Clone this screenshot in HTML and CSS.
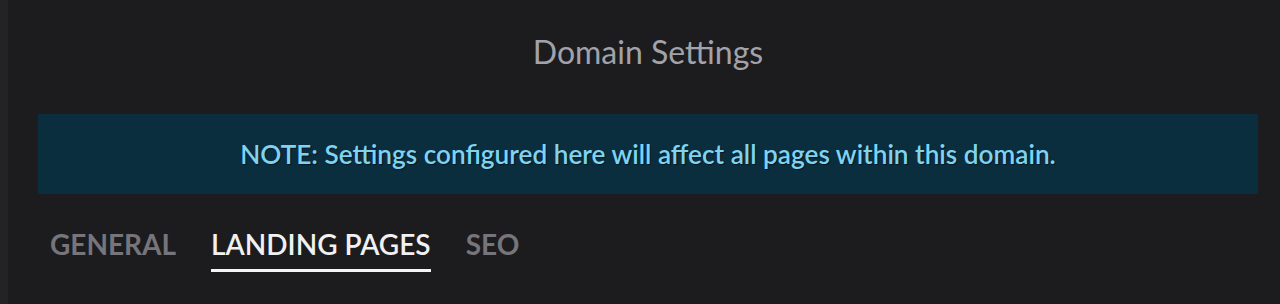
FILE: index.html
```html
<!DOCTYPE html>
<html lang="en">
<head>
<meta charset="utf-8">
<title>Domain Settings</title>
<link rel="stylesheet" href="styles.css">
</head>
<body>
<div class="page">
  <aside class="rail"></aside>
  <main class="panel">
    <h1 class="title">Domain Settings</h1>
    <div class="note">NOTE: Settings configured here will affect all pages within this domain.</div>
    <nav class="tabs">
      <a class="tab">GENERAL</a>
      <a class="tab active">LANDING PAGES</a>
      <a class="tab">SEO</a>
    </nav>
  </main>
</div>
</body>
</html>
```
FILE: styles.css
```css
html, body {
  margin: 0;
  padding: 0;
  background: #1c1c1e;
}
body {
  font-family: Lato, "Open Sans", sans-serif;
  height: 304px;
  overflow: hidden;
}
.page {
  display: flex;
  height: 304px;
}
.rail {
  width: 8px;
  flex: 0 0 8px;
  background: #232326;
}
.panel {
  flex: 1;
  padding: 0 22px 0 30px;
  display: flex;
  flex-direction: column;
}
.title {
  margin: 0;
  padding-top: 33px;
  height: 114px;
  flex: 0 0 114px;
  box-sizing: border-box;
  text-align: center;
  font-weight: 400;
  font-size: 32px;
  line-height: 38px;
  color: #a2a2aa;
}
.note {
  height: 80px;
  flex: 0 0 80px;
  background: #0b2e3f;
  color: #7fd3f1;
  font-size: 26.2px;
  font-weight: 600;
  display: flex;
  align-items: center;
  justify-content: center;
  text-shadow: 1px 1px 1px rgba(0,0,0,0.5);
}
.tabs {
  display: flex;
  gap: 35px;
  padding: 36px 0 0 12px;
}
.tab {
  font-size: 28px;
  font-weight: 700;
  color: #76757b;
  line-height: 28px;
  padding-bottom: 11px;
  border-bottom: 3px solid transparent;
}
.tab.active {
  color: #f1f1f3;
  font-weight: 600;
  border-bottom-color: #f4f4f6;
}
```
